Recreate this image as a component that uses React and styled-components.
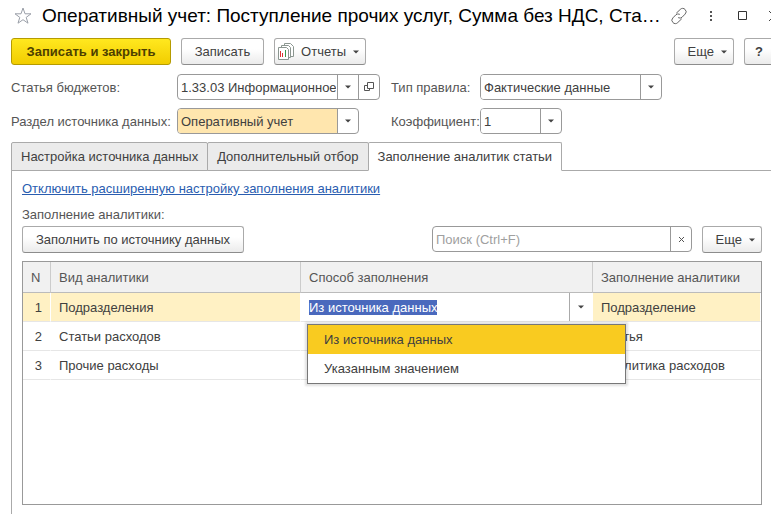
import { useEffect, useRef } from "react";
import styled, { createGlobalStyle } from "styled-components";

const analytics = [
  { id: 1, kind: "Подразделения", target: "Подразделение" },
  { id: 2, kind: "Статьи расходов", target: "Статья" },
  { id: 3, kind: "Прочие расходы", target: "Аналитика расходов" },
];

function Arrow() {
  return (
    <svg width="6" height="4" viewBox="0 0 6 4" aria-hidden="true">
      <path d="M0 0.5h6L3 3.5z" fill="#444" />
    </svg>
  );
}

function SelectField({ id, value, width, filled }) {
  return (
    <Field $width={width}>
      <Select id={id} defaultValue={value} $filled={filled}>
        <option>{value}</option>
      </Select>
      <FieldMark>
        <Arrow />
      </FieldMark>
    </Field>
  );
}

function Header() {
  return (
    <TitleBar>
      <IconButton aria-label="Добавить в избранное">
        <svg width="18" height="18" viewBox="0 0 18 18" fill="none" stroke="#9a9fa8">
          <path d="M9 1l2 5.800h6l-4.800 3.600 1.800 5.800L9 12.700l-5 3.500 1.800-5.800L1 6.800h6z" />
        </svg>
      </IconButton>
      <Title>Оперативный учет: Поступление прочих услуг, Сумма без НДС, Ста…</Title>
      <WindowButtons>
        <IconButton aria-label="Получить ссылку">
          <svg width="18" height="18" viewBox="0 0 18 18" fill="none" stroke="#666" strokeLinecap="round">
            <path d="M6.500 6l3.700-3.500a3.200 3.200 0 0 1 4.900 0 3.200 3.200 0 0 1 0 4.600l-3 3.100a3.200 3.200 0 0 1-3.600.6" />
            <path d="M11.500 12l-3.700 3.500a3.200 3.200 0 0 1-4.900 0 3.200 3.200 0 0 1 0-4.600l3-3.100a3.200 3.200 0 0 1 3.600-.6" />
          </svg>
        </IconButton>
        <IconButton aria-label="Меню">
          <svg width="18" height="18" viewBox="0 0 18 18" fill="#555">
            <path d="M8 4h2v2H8zM8 8h2v2H8zM8 12h2v2H8z" />
          </svg>
        </IconButton>
        <IconButton aria-label="Развернуть">
          <svg width="18" height="18" viewBox="0 0 18 18" fill="none" stroke="#333">
            <path d="M4.500 4.500h8v8h-8z" />
          </svg>
        </IconButton>
        <IconButton aria-label="Закрыть">
          <svg width="18" height="18" viewBox="0 0 18 18" fill="none" stroke="#444">
            <path d="M3 4l10 10M13 4L3 14" />
          </svg>
        </IconButton>
      </WindowButtons>
    </TitleBar>
  );
}

function Toolbar() {
  return (
    <Commands>
      <PrimaryButton $width={160}>Записать и закрыть</PrimaryButton>
      <Button $width={83}>Записать</Button>
      <MenuButton $width={92}>
        <svg width="16" height="17" viewBox="0 0 16 17" fill="#fff" stroke="#8b9690">
          <path d="M6.500.5h6l3 3v10h-9z" />
          <path d="M3.500 2.500h7l2 2v10h-9z" />
          <path d="M.5 4.500h8l2 2v10H.5z" />
          <path d="M2.500 8v6" stroke="#d33" />
          <path d="M4.500 10v4" stroke="#d33" />
          <path d="M7.500 7v7" stroke="#3a9a4a" />
        </svg>
        Отчеты
        <Arrow />
      </MenuButton>
      <Spacer />
      <MenuButton $width={60}>
        Еще
        <Arrow />
      </MenuButton>
      <Button $width={30} aria-label="Справка">
        <b>?</b>
      </Button>
    </Commands>
  );
}

function RuleForm() {
  return (
    <Form>
      <FormRow>
        <Label htmlFor="item" $width={166}>Статья бюджетов:</Label>
        <FieldSlot>
          <Field $width={203}>
            <Input id="item" defaultValue="1.33.03 Информационное" />
            <FieldButton aria-label="Выбрать">
              <Arrow />
            </FieldButton>
            <FieldButton aria-label="Открыть">
              <svg width="10" height="10" viewBox="0 0 10 10" fill="none" stroke="#555">
                <path d="M3.500.5h6v6h-6z" />
                <path d="M3.500 3.500h-3v5h5v-2" />
              </svg>
            </FieldButton>
          </Field>
        </FieldSlot>
        <Label htmlFor="rule" $width={89}>Тип правила:</Label>
        <SelectField id="rule" value="Фактические данные" width={182} />
      </FormRow>
      <FormRow>
        <Label htmlFor="source" $width={166}>Раздел источника данных:</Label>
        <FieldSlot>
          <SelectField id="source" value="Оперативный учет" width={182} filled />
        </FieldSlot>
        <Label htmlFor="rate" $width={89}>Коэффициент:</Label>
        <SelectField id="rate" value="1" width={82} />
      </FormRow>
    </Form>
  );
}

function MethodEditor() {
  const input = useRef(null);

  useEffect(() => {
    input.current.focus();
    input.current.select();
  }, []);

  return (
    <Editor>
      <EditorInput
        ref={input}
        aria-label="Способ заполнения"
        defaultValue="Из источника данных"
      />
      <EditorButton aria-label="Показать список">
        <Arrow />
      </EditorButton>
      <Menu role="listbox">
        <MenuItem role="option" aria-selected="true">Из источника данных</MenuItem>
        <MenuItem role="option" aria-selected="false">Указанным значением</MenuItem>
      </Menu>
    </Editor>
  );
}

function AnalyticsTable() {
  return (
    <TableFrame>
      <Table>
        <colgroup>
          <Col $width={28} />
          <Col $width={250} />
          <Col $width={292} />
          <col />
        </colgroup>
        <thead>
          <tr>
            <Th>N</Th>
            <Th>Вид аналитики</Th>
            <Th>Способ заполнения</Th>
            <Th>Заполнение аналитики</Th>
          </tr>
        </thead>
        <tbody>
          {analytics.map((row) => (
            <Row key={row.id} $active={row.id === 1}>
              <NumberCell>{row.id}</NumberCell>
              <Td>{row.kind}</Td>
              {row.id === 1 ? (
                <EditCell>
                  <MethodEditor />
                </EditCell>
              ) : (
                <Td />
              )}
              <Td>{row.target}</Td>
            </Row>
          ))}
        </tbody>
      </Table>
    </TableFrame>
  );
}

function App() {
  return (
    <Window>
      <GlobalStyle />
      <Header />
      <Toolbar />
      <RuleForm />
      <Tabs role="tablist">
        <Tab role="tab" aria-selected="false">Настройка источника данных</Tab>
        <Tab role="tab" aria-selected="false">Дополнительный отбор</Tab>
        <Tab role="tab" aria-selected="true">Заполнение аналитик статьи</Tab>
      </Tabs>
      <Panel role="tabpanel">
        <Link href="#simple">Отключить расширенную настройку заполнения аналитики</Link>
        <Caption>Заполнение аналитики:</Caption>
        <TableCommands>
          <Button $width={222}>Заполнить по источнику данных</Button>
          <Spacer />
          <Field $width={260}>
            <Input aria-label="Поиск" placeholder="Поиск (Ctrl+F)" />
            <FieldButton aria-label="Очистить">
              <svg width="7" height="7" viewBox="0 0 7 7" stroke="#555">
                <path d="M1 1l5 5M6 1L1 6" />
              </svg>
            </FieldButton>
          </Field>
          <MenuButton $width={60}>
            Еще
            <Arrow />
          </MenuButton>
        </TableCommands>
        <AnalyticsTable />
      </Panel>
    </Window>
  );
}

const GlobalStyle = createGlobalStyle`
  * {
    box-sizing: border-box;
  }

  body {
    margin: 0;
    overflow-x: hidden;
    background-color: #fff;
  }

  body, button, input, select {
    font-family: "Liberation Sans", Arial, sans-serif;
    font-size: 13px;
    color: #404040;
  }
`;

const Window = styled.div`
  display: flex;
  flex-direction: column;
  min-height: 100vh;
  padding-left: 11px;
  overflow: hidden;
`;

const TitleBar = styled.header`
  display: flex;
  align-items: center;
  gap: 10px;
  height: 32px;
  margin-right: -13px;
  padding-left: 3px;
`;

const Title = styled.h1`
  flex: 1;
  min-width: 0;
  margin: 0;
  font-size: 19px;
  font-weight: 400;
  color: #000;
  white-space: nowrap;
`;

const WindowButtons = styled.div`
  display: flex;
  flex: none;
  gap: 14px;
`;

const IconButton = styled.button`
  display: flex;
  padding: 0;
  border: none;
  background: none;
`;

const Commands = styled.div`
  display: flex;
  gap: 10px;
  margin: 6px -3px 0 0;
`;

const Spacer = styled.div`
  flex: 1;
`;

const Button = styled.button`
  display: flex;
  align-items: center;
  justify-content: center;
  gap: 7px;
  flex: none;
  width: ${(props) => props.$width}px;
  height: 27px;
  padding: 0;
  border: 1px solid #aaa;
  border-bottom-color: #8c8c8c;
  border-radius: 3px;
  background: linear-gradient(#fff 40%, #ebebeb);
  white-space: nowrap;
`;

const PrimaryButton = styled(Button)`
  border-color: #b59b00;
  background: linear-gradient(#ffe81f, #f2cd00);
  font-weight: 700;
  color: #4d4000;
`;

const MenuButton = styled(Button)`
  justify-content: flex-end;
  padding-right: 6px;
`;

const Form = styled.div`
  display: flex;
  flex-direction: column;
  gap: 8px;
  margin-top: 9px;
`;

const FormRow = styled.div`
  display: flex;
  align-items: center;
`;

const Label = styled.label`
  flex: none;
  width: ${(props) => props.$width}px;
  color: #555;
  white-space: nowrap;
`;

const FieldSlot = styled.div`
  flex: none;
  width: 214px;
`;

const Field = styled.div`
  display: flex;
  flex: none;
  width: ${(props) => props.$width}px;
  height: 26px;
  border: 1px solid #999;
  border-radius: 4px;
  background-color: #fff;
  overflow: hidden;
`;

const Input = styled.input`
  flex: 1;
  min-width: 0;
  padding: 0 1px 0 3px;
  border: none;
  outline: none;
  background: none;

  &::placeholder {
    color: #a0a0a0;
  }
`;

const Select = styled.select`
  flex: 1;
  min-width: 0;
  padding: 0 3px;
  border: none;
  border-radius: 0;
  outline: none;
  appearance: none;
  background-color: ${(props) => (props.$filled ? "#ffe6ae" : "#fff")};
`;

const FieldMark = styled.span`
  display: flex;
  align-items: center;
  justify-content: center;
  flex: none;
  width: 21px;
  border-left: 1px solid #999;
`;

const FieldButton = styled.button`
  display: flex;
  align-items: center;
  justify-content: center;
  flex: none;
  width: 21px;
  padding: 0;
  border: none;
  border-left: 1px solid #999;
  background: none;
`;

const Tabs = styled.div`
  display: flex;
  height: 29px;
  margin-top: 8px;
  border-bottom: 1px solid #aaa;
`;

const Tab = styled.button`
  height: 29px;
  padding: 0 9px;
  border: 1px solid #aaa;
  border-radius: 2px 2px 0 0;
  background-color: #ebebeb;
  white-space: nowrap;

  & + & {
    margin-left: -1px;
  }

  &[aria-selected="true"] {
    border-bottom-color: #fff;
    background-color: #fff;
  }
`;

const Panel = styled.main`
  display: flex;
  flex-direction: column;
  align-items: flex-start;
  flex: 1;
  padding: 9px 9px 9px 10px;
  border-left: 1px solid #aaa;
`;

const Link = styled.a`
  line-height: 18px;
  color: #2a5db0;
`;

const Caption = styled.div`
  margin-top: 8px;
  line-height: 18px;
  color: #555;
`;

const TableCommands = styled.div`
  display: flex;
  gap: 10px;
  width: 100%;
  margin-top: 2px;
`;

const TableFrame = styled.div`
  flex: 1;
  width: 100%;
  margin-top: 8px;
  border: 1px solid #999;
`;

const Table = styled.table`
  width: 100%;
  table-layout: fixed;
  border-collapse: separate;
  border-spacing: 0;
`;

const Col = styled.col`
  width: ${(props) => props.$width}px;
`;

const Th = styled.th`
  height: 31px;
  padding: 0 8px;
  border-right: 1px solid #ccc;
  border-bottom: 1px solid #bbb;
  background-color: #f1f1f1;
  font-weight: 400;
  color: #555;
  text-align: left;
  white-space: nowrap;

  &:last-child {
    border-right: none;
  }
`;

const Td = styled.td`
  height: 29px;
  padding: 0 8px;
  border-right: 1px solid #fff;
  border-bottom: 1px solid #e6e6e6;
  white-space: nowrap;
`;

const NumberCell = styled(Td)`
  text-align: right;
`;

const EditCell = styled(Td)`
  padding: 0;
  background-color: #fff;
`;

const Row = styled.tr`
  background-color: ${(props) => (props.$active ? "#fff1c4" : "#fff")};
`;

const Editor = styled.div`
  position: relative;
  display: flex;
  height: 28px;
`;

const EditorInput = styled.input`
  flex: 1;
  min-width: 0;
  padding: 0 8px;
  border: none;
  outline: none;
  background: none;

  &::selection {
    background-color: #4a69bd;
    color: #fff;
  }
`;

const EditorButton = styled.button`
  display: flex;
  align-items: center;
  justify-content: center;
  width: 23px;
  padding: 0;
  border: none;
  border-left: 1px solid #aaa;
  background: none;
`;

const Menu = styled.ul`
  position: absolute;
  z-index: 1;
  top: 31px;
  left: 6px;
  width: 319px;
  margin: 0;
  padding: 0;
  border: 1px solid #777;
  background-color: #fff;
  box-shadow: 0 0 2px 2px rgba(0, 0, 0, 0.12);
  list-style: none;
`;

const MenuItem = styled.li`
  padding-left: 16px;
  line-height: 29px;

  &[aria-selected="true"] {
    background-color: #f9cb20;
  }
`;

export default App;
